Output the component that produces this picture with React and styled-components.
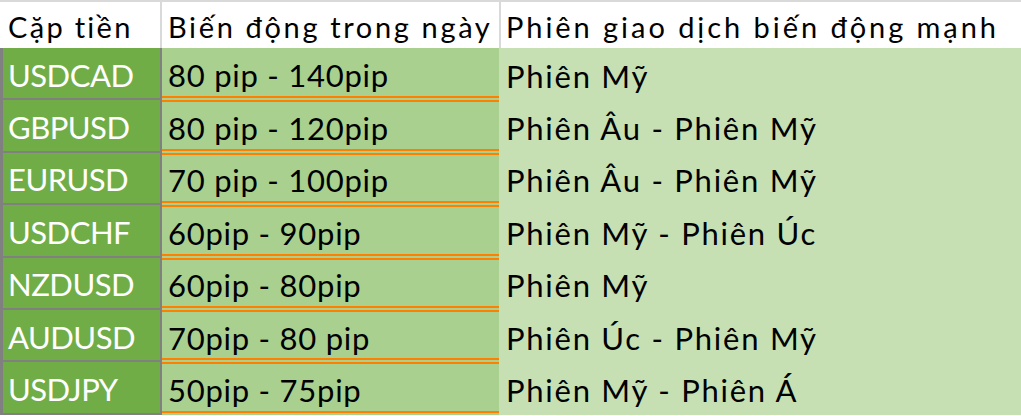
import React from 'react'
import styled, { createGlobalStyle } from 'styled-components'

const GlobalStyle = createGlobalStyle`
  * { box-sizing: border-box; }
  html, body {
    margin: 0;
    padding: 0;
    background: #ffffff;
  }
  body {
    font-family: Lato, "Liberation Sans", "Noto Sans", sans-serif;
  }
`

const Sheet = styled.div`
  width: 1021px;
  height: 416px;
  overflow: hidden;
  border-top: 2px solid #d9d9d9;
  background: #ffffff;
`

const HeaderRow = styled.div`
  display: grid;
  grid-template-columns: 160px 339px 1fr;
  height: 46px;
  background: #ffffff;
`

const HeadCell = styled.div`
  display: flex;
  align-items: center;
  padding: 2px 0 0 ${props => props.$pad || 9}px;
  border-left: ${props => (props.$divider ? '2px solid #d9d9d9' : 'none')};
  font-size: 29px;
  letter-spacing: ${props => props.$spacing || 2.2}px;
  color: #000000;
  white-space: nowrap;
`

const BodyRow = styled.div`
  display: grid;
  grid-template-columns: 162px 337px 1fr;
  height: 52.4px;
`

const PairCell = styled.div`
  display: flex;
  align-items: center;
  padding: 3px 0 0 5px;
  background: #70ad47;
  border-left: 3px solid #808080;
  border-right: 2px solid #808080;
  border-bottom: 2.4px solid #808080;
  color: #ffffff;
  font-size: 31px;
  letter-spacing: -0.5px;
  white-space: nowrap;
`

const RangeCell = styled.div`
  display: flex;
  align-items: center;
  padding: 3px 0 0 6px;
  background: #a9d08e;
  border-top: ${props => (props.$first ? 'none' : '2px solid #ff8000')};
  border-bottom: 2.4px solid #a9d08e;
  box-shadow: inset 0 -2px 0 #ff8000;
  color: #000000;
  font-size: 31px;
  letter-spacing: 0.75px;
  white-space: nowrap;
`

const SessionCell = styled.div`
  display: flex;
  align-items: center;
  padding: 3px 0 0 7px;
  background: #c6e0b4;
  color: #000000;
  font-size: 31px;
  letter-spacing: 1.75px;
  white-space: nowrap;
`

const rows = [
  { pair: 'USDCAD', range: '80 pip - 140pip', session: 'Phiên Mỹ' },
  { pair: 'GBPUSD', range: '80 pip - 120pip', session: 'Phiên Âu - Phiên Mỹ' },
  { pair: 'EURUSD', range: '70 pip - 100pip', session: 'Phiên Âu - Phiên Mỹ' },
  { pair: 'USDCHF', range: '60pip - 90pip', session: 'Phiên Mỹ - Phiên Úc' },
  { pair: 'NZDUSD', range: '60pip - 80pip', session: 'Phiên Mỹ' },
  { pair: 'AUDUSD', range: '70pip - 80 pip', session: 'Phiên Úc - Phiên Mỹ' },
  { pair: 'USDJPY', range: '50pip - 75pip', session: 'Phiên Mỹ - Phiên Á' },
]

const App = () => {
  return (
    <>
      <GlobalStyle />
      <Sheet>
        <HeaderRow>
          <HeadCell $pad={8} $spacing={2.3}>Cặp tiền</HeadCell>
          <HeadCell $divider $pad={6} $spacing={2.65}>Biến động trong ngày</HeadCell>
          <HeadCell $divider $pad={5} $spacing={2.95}>Phiên giao dịch biến động mạnh</HeadCell>
        </HeaderRow>
        {rows.map((row, i) => (
          <BodyRow key={row.pair}>
            <PairCell>{row.pair}</PairCell>
            <RangeCell $first={i === 0}>{row.range}</RangeCell>
            <SessionCell>{row.session}</SessionCell>
          </BodyRow>
        ))}
      </Sheet>
    </>
  )
}

export default App
